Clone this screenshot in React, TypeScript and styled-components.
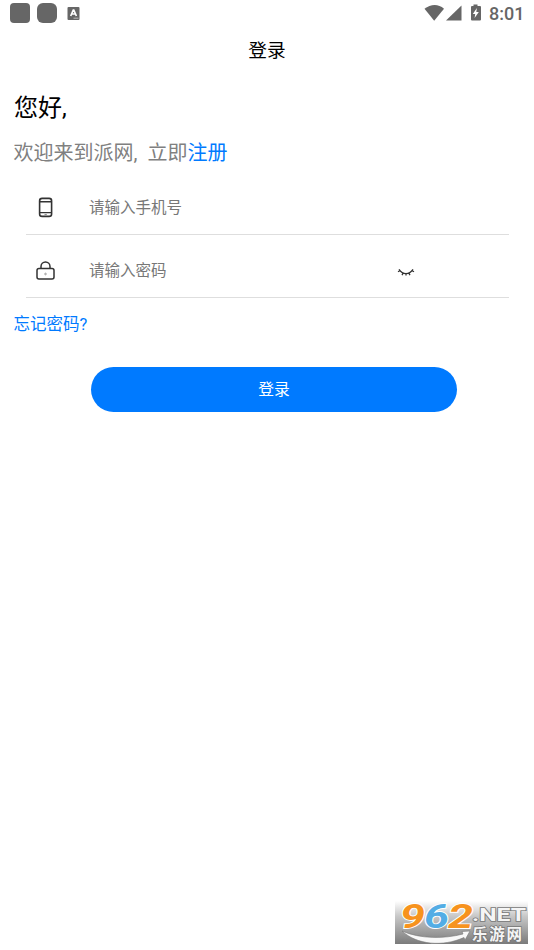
import React from "react";
import styled, { createGlobalStyle } from "styled-components";

const GlobalStyle = createGlobalStyle`
  * { box-sizing: border-box; }
  body {
    margin: 0;
    background: #fff;
    font-family: Roboto, "Noto Sans CJK SC", sans-serif;
  }
`;

const Screen = styled.main`
  display: flex;
  flex-direction: column;
  width: 534px;
  height: 950px;
  overflow: hidden;
  background: #fff;
`;

const StatusBar = styled.header`
  display: flex;
  align-items: center;
  justify-content: space-between;
  height: 26px;
  padding: 0 10px;
  flex: none;
`;

const StatusGroup = styled.div`
  display: flex;
  align-items: center;
`;

const AppBadge = styled.span<{ $round: number }>`
  width: 20px;
  height: 20px;
  margin-right: 7px;
  border-radius: ${(p) => p.$round}px;
  background: #666;
`;

const Clock = styled.span`
  width: 35px;
  margin-left: 7px;
  color: #666;
  font-size: 18px;
  font-weight: 500;
  line-height: 26px;
  padding-top: 1px;
  white-space: nowrap;
`;

const TitleBar = styled.div`
  height: 49px;
  flex: none;
  color: #000;
  font-size: 18.7px;
  line-height: 50px;
  text-align: center;
`;

const Greeting = styled.h1`
  height: 32px;
  margin: 17px 0 0 14px;
  flex: none;
  color: #000;
  font-size: 24px;
  font-weight: 400;
  line-height: 32px;
`;

const Welcome = styled.p`
  display: flex;
  height: 30px;
  margin: 14px 0 0 13.5px;
  flex: none;
  color: #808080;
  font-size: 20px;
  line-height: 30px;
  white-space: pre;
`;

const WelcomeLead = styled.span`
  width: 134px;
`;

const Link = styled.a`
  color: #007aff;
`;

const Form = styled.form`
  display: flex;
  flex-direction: column;
  margin: 13px 25px 0 26px;
  flex: none;
`;

const Field = styled.label`
  display: flex;
  align-items: center;
  height: 63px;
  padding: 10px 94px 0 9px;
  border-bottom: 1px solid #dedede;

  &:first-child { height: 54px; padding-top: 0; }
`;

const Input = styled.input`
  flex: 1;
  min-width: 0;
  margin-left: 33px;
  padding: 0;
  border: 0;
  outline: 0;
  background: transparent;
  color: #333;
  font: 15.5px/24px Roboto, "Noto Sans CJK SC", sans-serif;

  &::placeholder { color: #777; opacity: 1; }
`;

const Forgot = styled(Link)`
  height: 24px;
  margin: 15px 0 0 13.5px;
  flex: none;
  font-size: 16.5px;
  line-height: 24px;
`;

const Submit = styled.button`
  width: 366px;
  height: 45px;
  margin: 30px 0 0 91px;
  padding: 0;
  flex: none;
  border: 0;
  border-radius: 23px;
  background: #007aff;
  color: #fff;
  font: 15.8px/24px Roboto, "Noto Sans CJK SC", sans-serif;
`;

const Watermark = styled.footer`
  width: 133px;
  height: 43px;
  margin: auto 6px 6px auto;
  flex: none;
  background: linear-gradient(#fff, #c8c8c8 35%, #7b7b7b);

  svg { display: block; overflow: visible; }
`;

const PhoneIcon = () => (
  <svg width="21" height="22" viewBox="0 0 21 22" fill="none" stroke="#333">
    <rect x="4.6" y="1.4" width="12" height="18" rx="2.5" strokeWidth="1.6" />
    <path d="M5 4.8h11M5 15.6h11" strokeWidth="1.4" />
    <path d="M9.5 17.6h2.3" strokeWidth="1" stroke="#888" />
  </svg>
);

const LockIcon = () => (
  <svg width="21" height="22" viewBox="0 0 21 22" fill="none" stroke="#333" strokeWidth="1.5">
    <rect x="2" y="8.5" width="17" height="10.5" rx="2" />
    <path d="M6 8.5V6.5a4.5 4.5 0 0 1 9 0v2" />
    <circle cx="10.5" cy="14" r=".8" stroke="#999" strokeWidth="1" />
  </svg>
);

const ClosedEyeIcon = () => (
  <svg width="18" height="12" viewBox="0 0 18 12" fill="none" stroke="#333" strokeWidth="1.3">
    <path d="M2 4.3C6 10 12 10 16 4.3M3.3 5.5 1 6.8M6.3 8 5 10.2M9 8.6v2M11.7 8l1.3 2.2M14.7 5.5 17 6.8" />
  </svg>
);

const App = () => (
  <>
    <GlobalStyle />
    <Screen>
      <StatusBar>
        <StatusGroup>
          <AppBadge $round={4} />
          <AppBadge $round={6} />
          <svg width="20" height="20" viewBox="0 0 20 20">
            <rect x="3.5" y="4" width="12" height="13" rx="1" fill="#666" />
            <path d="m6.7 13 2.6-6h.5l2.6 6M7.8 11h3.5" fill="none" stroke="#fff" strokeWidth="1.7" />
            <path d="M9.5 15.2h5" stroke="#ddd" strokeWidth=".7" />
          </svg>
        </StatusGroup>
        <StatusGroup>
          <svg width="58" height="20" viewBox="0 0 58 20" fill="#666">
            <path d="M.5 5.8C6.5 1.3 14 .4 20 5.8L10.2 17.7Z" />
            <path d="M37.5 2.5v15H22Z" />
            <path d="M49.5 1.5h4V3H56q1 0 1 1v12.5q0 1-1 1h-8q-1 0-1-1V4q0-1 1-1h1.5Z" />
            <path d="m52.9 5-4.1 6h2.4l-.6 4 4.2-6h-2.5Z" fill="#fff" />
          </svg>
          <Clock>8:01</Clock>
        </StatusGroup>
      </StatusBar>
      <TitleBar>登录</TitleBar>
      <Greeting>您好,</Greeting>
      <Welcome>
        <WelcomeLead>欢迎来到派网,</WelcomeLead>
        <span>立即</span>
        <Link>注册</Link>
      </Welcome>
      <Form>
        <Field>
          <PhoneIcon />
          <Input type="tel" placeholder="请输入手机号" />
        </Field>
        <Field>
          <LockIcon />
          <Input type="password" placeholder="请输入密码" />
          <ClosedEyeIcon />
        </Field>
      </Form>
      <Forgot>忘记密码?</Forgot>
      <Submit type="button">登录</Submit>
      <Watermark>
        <svg width="133" height="43" viewBox="0 0 133 43">
          <g fontFamily="Roboto" fontWeight="700" fontStyle="italic" fontSize="33" stroke="#fff" strokeWidth="1.8" paintOrder="stroke">
            <text x="5" y="26.5" textLength="25" lengthAdjust="spacingAndGlyphs" fill="#f7931e">9</text>
            <text x="29" y="26.5" textLength="25" lengthAdjust="spacingAndGlyphs" fill="#53ade5">6</text>
            <text x="53" y="26.5" textLength="25" lengthAdjust="spacingAndGlyphs" fill="#f7931e">2</text>
          </g>
          <path d="M7 30C25 38 49 38 68 33l-1-2.5 8-.5-5 9-1-2.5C48 46 22 44 7 30Z" fill="#f8f8f8" stroke="#777" strokeWidth=".6" />
          <g fill="#f5f5f5" stroke="#777" strokeWidth="1.5" paintOrder="stroke" fontWeight="700">
            <text x="77" y="20" fontFamily="Roboto" fontSize="19" textLength="54" lengthAdjust="spacingAndGlyphs">.NET</text>
            <text x="77" y="38.5" fontFamily="Noto Sans CJK SC" fontSize="15.5" textLength="50">乐游网</text>
          </g>
        </svg>
      </Watermark>
    </Screen>
  </>
);

export default App;
